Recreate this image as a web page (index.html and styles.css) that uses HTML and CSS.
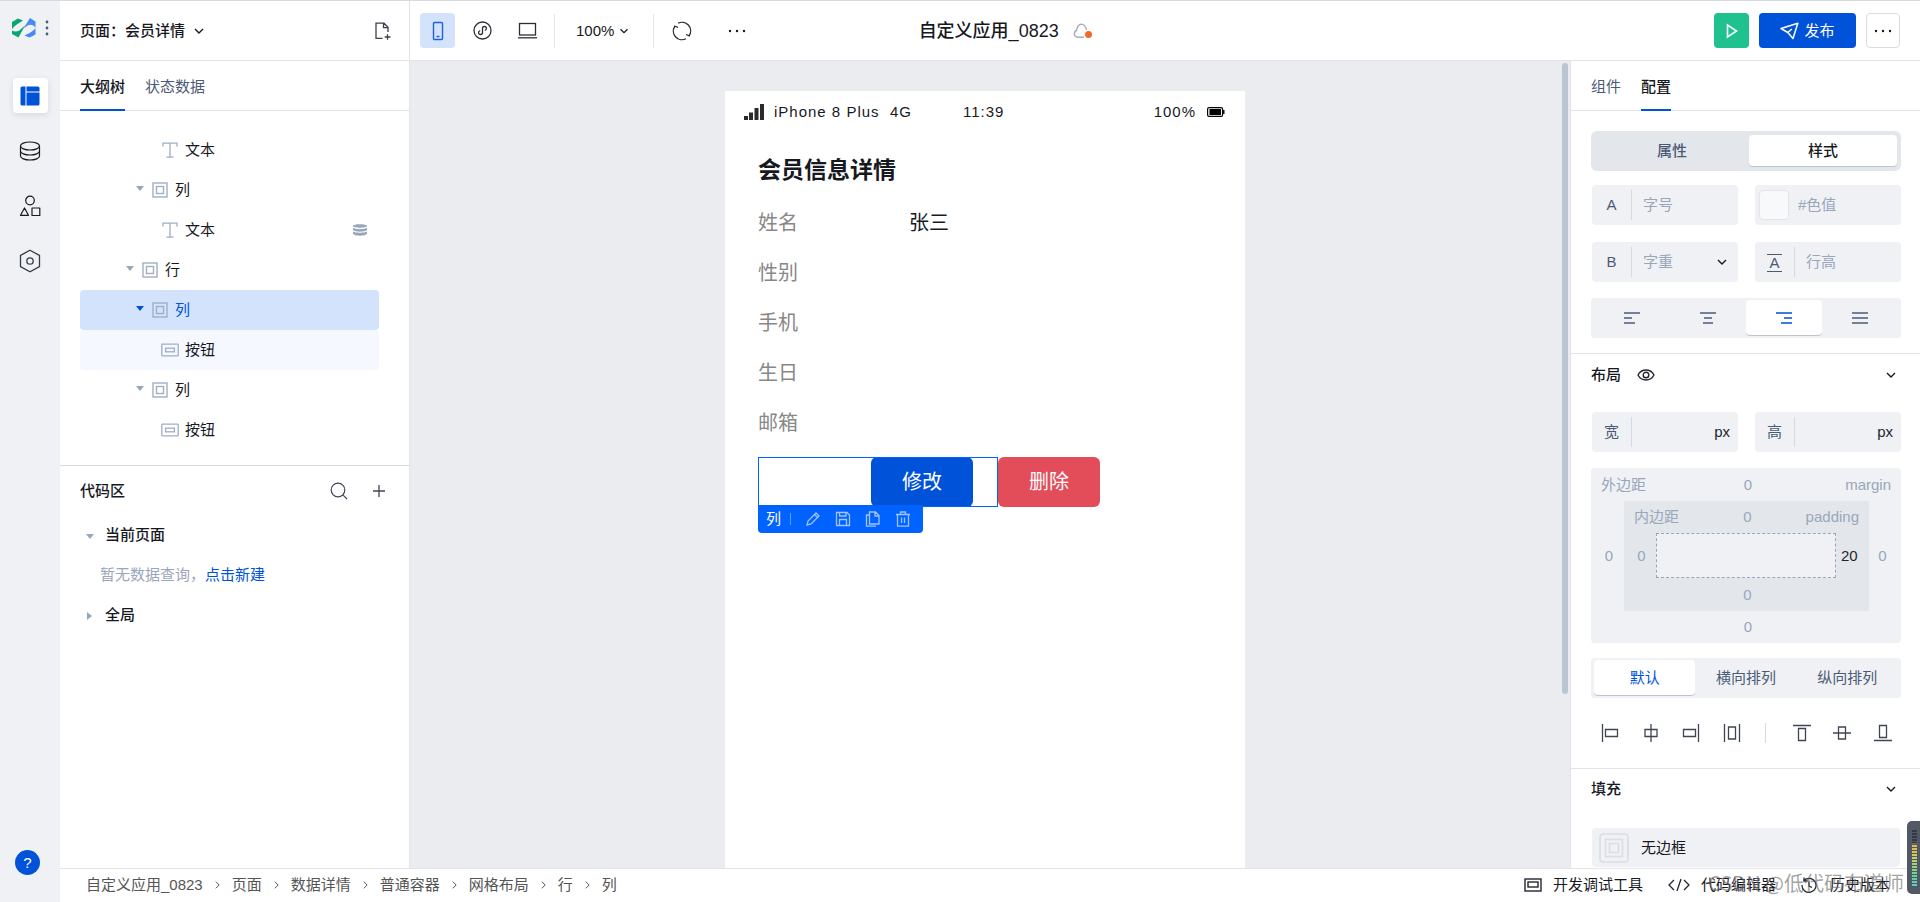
FILE: index.html
```html
<!DOCTYPE html>
<html lang="zh-CN">
<head>
<meta charset="utf-8">
<title>自定义应用_0823</title>
<link rel="stylesheet" href="styles.css">
</head>
<body>
<svg class="defs" aria-hidden="true">
  <symbol id="chev" viewBox="0 0 16 16"><path d="M4 6l4 4 4-4" fill="none" stroke="currentColor" stroke-width="1.4"/></symbol>
  <symbol id="crumb" viewBox="0 0 6 10"><path d="M1 1l4 4-4 4" fill="none" stroke="currentColor" stroke-width="1.2"/></symbol>
  <symbol id="box" viewBox="0 0 16 16"><g fill="none" stroke="#a0aec3"><rect x="1" y="1" width="14" height="14" stroke-width="1.4"/><rect x="4.5" y="4.5" width="7" height="7" stroke-width="1.4"/></g></symbol>
  <symbol id="btn" viewBox="0 0 18 14"><g fill="none" stroke="#a0aec3" stroke-width="1.3"><rect x=".8" y="1.2" width="16.4" height="11.6" rx=".5"/><rect x="4.6" y="5.2" width="8.8" height="3.6"/></g></symbol>
  <symbol id="txt" viewBox="0 0 16 16"><path d="M1 4.500V1.200h14v3.300M8 1.200v14M4.500 15.200h7" fill="none" stroke="#a0aec3" stroke-width="1.300"/></symbol>
</svg>
<div class="app">
  <nav class="rail" aria-label="主导航">
    <div class="brand">
      <svg width="24" height="20" viewBox="0 0 24 20"><path d="M0 4 6 .5l5 2C7 5 2 8 0 11zM0 12.500c2 1.500 5 1.200 7 .2L13 7.500 6.500 19.500 0 16z" fill="#0aa66e"/><path d="M11.500 10.500 18 0l5.500 3.500V10c-1.500-3-5-4-8-2.500zM12.500 17.500c4-1.500 9-4.500 11-7.500v6.500l-6 3z" fill="#4789f5"/></svg>
      <svg width="4" height="16" viewBox="0 0 4 16" fill="#4b5b76"><circle cx="2" cy="2" r="1.400"/><circle cx="2" cy="8" r="1.400"/><circle cx="2" cy="14" r="1.400"/></svg>
    </div>
    <button class="rail-btn on" aria-label="页面"><svg width="20" height="20" viewBox="0 0 20 20" fill="#0052d9"><path d="M.5 2a1.500 1.500 0 0 1 1.500-1.500h3.500v19H2A1.500 1.500 0 0 1 .5 18zM6.500.5H18A1.500 1.500 0 0 1 19.500 2v3.500h-13zM6.500 6.500h13V18a1.500 1.500 0 0 1-1.500 1.500H6.500z"/></svg></button>
    <button class="rail-btn" aria-label="数据"><svg width="22" height="20" viewBox="0 0 22 20" fill="none" stroke="#17191f" stroke-width="1.200"><ellipse cx="11" cy="5" rx="9.500" ry="4"/><path d="M1.500 5v10c0 2.200 4.200 4 9.500 4s9.500-1.800 9.500-4V5M1.500 10c0 2.200 4.200 4 9.500 4s9.500-1.800 9.500-4"/></svg></button>
    <button class="rail-btn" aria-label="组件"><svg width="22" height="22" viewBox="0 0 22 22" fill="none" stroke="#17191f" stroke-width="1.200"><circle cx="11" cy="5.500" r="4.300"/><path d="M5.500 13 9.500 20.300h-8zM13 13h7.800v7.500H13z" stroke-linejoin="round"/></svg></button>
    <button class="rail-btn" aria-label="设置"><svg width="22" height="24" viewBox="0 0 22 24" fill="none" stroke="#363c47" stroke-width="1.300"><path d="M11 1.200 20.500 6.500v11L11 22.800 1.500 17.500v-11z"/><circle cx="11" cy="12" r="3.200"/></svg></button>
    <button class="help" aria-label="帮助">?</button>
  </nav>

  <div class="body">
    <header class="top">
      <div class="top-page">
        <button class="plain page-pick">页面：会员详情 <svg width="16" height="16"><use href="#chev"/></svg></button>
        <button class="plain" aria-label="新建页面"><svg width="16" height="18" viewBox="0 0 16 18" fill="none" stroke="#3a404c" stroke-width="1.300"><path d="M7.500 16.300H1V1.200h8l4 4V10M8.500 1.200v4.500H13M12.500 12.200v5.600M9.700 15h5.800"/></svg></button>
      </div>
      <div class="top-main">
        <div class="tools">
          <button class="tool on" aria-label="手机"><svg width="12" height="20" viewBox="0 0 12 20" fill="none" stroke="#1f62e0" stroke-width="1.400"><rect x="1.500" y="1.500" width="9" height="17" rx="1"/><path d="M4.500 15.500h3"/></svg></button>
          <button class="tool" aria-label="小程序"><svg width="19" height="19" viewBox="0 0 19 19" fill="none" stroke="#2a2e36" stroke-width="1.300"><circle cx="9.500" cy="9.500" r="8.500"/><path d="M11.800 9.300c2-.5 2.500-3.800-.4-3.800-1.200 0-1.900.9-1.900 2v4c0 1.100-.7 2-1.900 2-2.900 0-2.400-3.300-.4-3.800"/></svg></button>
          <button class="tool" aria-label="电脑"><svg width="19" height="17" viewBox="0 0 19 17" fill="none" stroke="#2a2e36" stroke-width="1.300"><rect x="1.500" y="1.500" width="16" height="11.500"/><path d="M0 15.800h19"/></svg></button>
          <span class="vline"></span>
          <button class="plain zoom">100%<svg width="14" height="14"><use href="#chev"/></svg></button>
          <span class="vline"></span>
          <button class="tool" aria-label="刷新"><svg width="20" height="20" viewBox="0 0 20 20" fill="none" stroke="#2a2e36" stroke-width="1.300"><path d="M6 2.300A8.600 8.600 0 0 1 17.300 14.500M14 17.700A8.600 8.600 0 0 1 2.700 5.500M18.600 11.500 17.200 14.800 14 13.500M1.400 8.500 2.800 5.200 6 6.500"/></svg></button>
          <button class="tool more" aria-label="更多"><svg width="18" height="4" viewBox="0 0 18 4" fill="#17191f"><circle cx="2" cy="2" r="1.200"/><circle cx="9" cy="2" r="1.200"/><circle cx="16" cy="2" r="1.200"/></svg></button>
        </div>
        <div class="title">自定义应用_0823
          <svg width="20" height="16" viewBox="0 0 20 16"><path d="M11 14.200H4.500A3.500 3.500 0 0 1 3.500 7.500C4 4 6 1.200 8.500 1.200S13 4 13.500 7" fill="none" stroke="#a3adbd" stroke-width="1.400"/><circle cx="15.500" cy="11.500" r="3.500" fill="#f2692a"/></svg>
        </div>
        <div class="actions">
          <button class="run" aria-label="预览"><svg width="12" height="16" viewBox="0 0 12 16" fill="none" stroke="#fff" stroke-width="1.600"><path d="M1.500 2v12l9-6z"/></svg></button>
          <button class="publish"><svg width="19" height="18" viewBox="0 0 19 18" fill="none" stroke="#fff" stroke-width="1.500"><path d="M1 6.500 17.800 1.200 13 16.500 7.800 10.500zM7.800 10.500l4-3.500" stroke-linejoin="round"/></svg>发布</button>
          <button class="dots" aria-label="更多操作"><svg width="18" height="4" viewBox="0 0 18 4" fill="#17191f"><circle cx="2" cy="2" r="1.200"/><circle cx="9" cy="2" r="1.200"/><circle cx="16" cy="2" r="1.200"/></svg></button>
        </div>
      </div>
    </header>

    <div class="work">
      <aside class="left">
        <div class="tabs"><button class="tab on">大纲树</button><button class="tab">状态数据</button></div>
        <ul class="tree">
          <li class="l3"><svg width="16" height="16"><use href="#txt"/></svg>文本</li>
          <li class="l2"><i class="caret"></i><svg width="16" height="16"><use href="#box"/></svg>列</li>
          <li class="l3"><svg width="16" height="16"><use href="#txt"/></svg>文本
            <svg class="bind" width="14" height="12" viewBox="0 0 14 12"><path d="M0 2C0-.3 14-.3 14 2S0 4.300 0 2zM0 3.800c2 1.600 12 1.600 14 0v2.200c-1 2.300-13 2.300-14 0zM0 7.600c2 1.600 12 1.600 14 0v2.200c-1 2.500-13 2.500-14 0z" fill="#99a6bb"/></svg></li>
          <li class="l1"><i class="caret"></i><svg width="16" height="16"><use href="#box"/></svg>行</li>
          <li class="l2 sel"><i class="caret"></i><svg width="16" height="16"><use href="#box"/></svg>列</li>
          <li class="l3 wide sub"><svg width="18" height="14"><use href="#btn"/></svg>按钮</li>
          <li class="l2"><i class="caret"></i><svg width="16" height="16"><use href="#box"/></svg>列</li>
          <li class="l3 wide"><svg width="18" height="14"><use href="#btn"/></svg>按钮</li>
        </ul>
        <section class="code">
          <div class="code-head"><h2>代码区</h2>
            <button class="plain" aria-label="搜索"><svg width="18" height="18" viewBox="0 0 18 18" fill="none" stroke="#3f4552" stroke-width="1.200"><circle cx="8" cy="8" r="6.800"/><path d="M12.800 12.800 17 17"/></svg></button>
            <button class="plain" aria-label="添加"><svg width="12" height="12" viewBox="0 0 12 12" stroke="#3f4552" stroke-width="1.300"><path d="M6 0v12M0 6h12"/></svg></button>
          </div>
          <div class="group"><i class="caret small"></i>当前页面</div>
          <p class="empty">暂无数据查询，<a href="#new">点击新建</a></p>
          <div class="group"><i class="caret small shut"></i>全局</div>
        </section>
      </aside>

      <main class="canvas">
        <div class="stage">
          <div class="phone">
            <div class="status">
              <svg width="20" height="16" viewBox="0 0 20 16" fill="#2b2b2b"><path d="M0 12h4v4H0zM5 8.500h4V16H5zM10.500 4h4v12h-4zM16 0h4v16h-4z"/></svg>
              <span class="carrier">iPhone 8 Plus&nbsp; 4G</span><span class="clock">11:39</span><span class="power">100%</span>
              <svg width="18" height="10" viewBox="0 0 18 10"><rect x=".6" y=".6" width="15" height="8.800" rx="1.500" fill="none" stroke="#000" stroke-width="1.200"/><rect x="2.500" y="2" width="11.500" height="6" fill="#000"/><path d="M16.800 3v4" stroke="#000" stroke-width="1.400"/></svg>
            </div>
            <h1>会员信息详情</h1>
            <dl class="info">
              <dt>姓名</dt><dd>张三</dd>
              <dt>性别</dt><dd></dd>
              <dt>手机</dt><dd></dd>
              <dt>生日</dt><dd></dd>
              <dt>邮箱</dt><dd></dd>
            </dl>
            <div class="btn-row">
              <div class="col picked"><button class="pbtn">修改</button>
                <div class="float">
                  <span>列</span><i></i>
                  <svg width="16" height="16" viewBox="0 0 16 16"><path d="M2 14l1-4 8-8 3 3-8 8zM9.500 3.500l3 3"/></svg>
                  <svg width="16" height="16" viewBox="0 0 16 16"><path d="M1.500 1.500h10.500l2.500 2.500v10.500h-13zM4.500 1.500v3.500h6.500V1.500M4.500 14.500V8.500h7v6"/></svg>
                  <svg width="16" height="16" viewBox="0 0 16 16"><path d="M4.500 1h6l3.500 3.500V13H4.500zM10 1v4h4M4 4H1.500v11.200H11"/></svg>
                  <svg width="16" height="16" viewBox="0 0 16 16"><path d="M1 3.500h14M5.500 3.500V1h5v2.500M2.500 3.500v11.700h11V3.500M6.500 6.500v5.500M9.500 6.500v5.500"/></svg>
                </div>
              </div>
              <div class="col"><button class="pbtn danger">删除</button></div>
            </div>
          </div>
        </div>
        <div class="thumb"></div>
      </main>

      <aside class="right">
        <div class="tabs"><button class="tab">组件</button><button class="tab on">配置</button></div>
        <div class="props">
          <div class="seg big"><button>属性</button><button class="on">样式</button></div>
          <div class="pair">
            <label class="field"><span class="tag">A</span><input type="text" placeholder="字号"></label>
            <label class="field"><span class="swatch"></span><input type="text" placeholder="#色值"></label>
            <label class="field"><span class="tag">B</span><select><option>字重</option></select><svg width="16" height="16"><use href="#chev"/></svg></label>
            <label class="field"><span class="tag"><b class="lh">A</b></span><input type="text" placeholder="行高"></label>
          </div>
          <div class="seg four">
            <button aria-label="左对齐"><svg width="16" height="12" viewBox="0 0 16 12"><path d="M0 1h16M0 6h8M0 11h11"/></svg></button>
            <button aria-label="居中"><svg width="16" height="12" viewBox="0 0 16 12"><path d="M0 1h16M4 6h8M3 11h10"/></svg></button>
            <button class="on" aria-label="右对齐"><svg width="16" height="12" viewBox="0 0 16 12"><path d="M0 1h16M8 6h8M5 11h11"/></svg></button>
            <button aria-label="两端对齐"><svg width="16" height="12" viewBox="0 0 16 12"><path d="M0 1h16M0 6h16M0 11h16"/></svg></button>
          </div>
        </div>
        <section class="props layout">
          <div class="sec"><h2>布局</h2><svg width="18" height="12" viewBox="0 0 18 12" fill="none" stroke="#23262e" stroke-width="1.400"><path d="M1 6C4.500-.7 13.500-.7 17 6 13.500 12.700 4.500 12.700 1 6z"/><circle cx="9" cy="6" r="2.800"/></svg><svg class="end" width="16" height="16"><use href="#chev"/></svg></div>
          <div class="pair">
            <label class="field"><span class="tag">宽</span><input type="text"><em>px</em></label>
            <label class="field"><span class="tag">高</span><input type="text"><em>px</em></label>
          </div>
          <div class="model outer">
            <span>外边距</span><span>0</span><span>margin</span>
            <span>0</span>
            <div class="model inner">
              <span>内边距</span><span>0</span><span>padding</span>
              <span>0</span><div class="core"></div><span class="set">20</span>
              <span class="foot">0</span>
            </div>
            <span>0</span>
            <span class="foot">0</span>
          </div>
          <div class="seg three"><button class="on">默认</button><button>横向排列</button><button>纵向排列</button></div>
          <div class="aligns">
            <button aria-label="靠左"><svg width="18" height="18" viewBox="0 0 18 18"><path d="M1.500 0v18M4.500 5.500h12v7h-12z"/></svg></button>
            <button aria-label="水平居中"><svg width="18" height="18" viewBox="0 0 18 18"><path d="M9 0v18M3 5.500h12v7H3z"/></svg></button>
            <button aria-label="靠右"><svg width="18" height="18" viewBox="0 0 18 18"><path d="M16.500 0v18M1.500 5.500h12v7h-12z"/></svg></button>
            <button aria-label="水平分布"><svg width="18" height="18" viewBox="0 0 18 18"><path d="M1.500 0v18M16.500 0v18M5.500 3h7v12h-7z"/></svg></button>
            <i></i>
            <button aria-label="靠上"><svg width="18" height="18" viewBox="0 0 18 18"><path d="M0 1.500h18M5.500 4.500h7v12h-7z"/></svg></button>
            <button aria-label="垂直居中"><svg width="18" height="18" viewBox="0 0 18 18"><path d="M0 9h18M5.500 3h7v12h-7z"/></svg></button>
            <button aria-label="靠下"><svg width="18" height="18" viewBox="0 0 18 18"><path d="M0 16.500h18M5.500 1.500h7v12h-7z"/></svg></button>
          </div>
        </section>
        <section class="props fill">
          <div class="sec"><h2>填充</h2><svg class="end" width="16" height="16"><use href="#chev"/></svg></div>
          <button class="border-pick"><svg width="30" height="30" viewBox="0 0 30 30" fill="none" stroke="#d9dde6" stroke-width="1.600"><rect x="1" y="1" width="28" height="28" rx="3"/><rect x="6.500" y="6.500" width="17" height="17"/><rect x="10.500" y="10.500" width="9" height="9"/></svg>无边框</button>
        </section>
      </aside>
    </div>

    <footer class="bottom">
      <nav class="crumbs" aria-label="层级">
        <a href="#0">自定义应用_0823</a><svg><use href="#crumb"/></svg><a href="#1">页面</a><svg><use href="#crumb"/></svg><a href="#2">数据详情</a><svg><use href="#crumb"/></svg><a href="#3">普通容器</a><svg><use href="#crumb"/></svg><a href="#4">网格布局</a><svg><use href="#crumb"/></svg><a href="#5">行</a><svg><use href="#crumb"/></svg><a href="#6">列</a>
      </nav>
      <button class="plain"><svg width="18" height="14" viewBox="0 0 18 14" fill="none" stroke="#23262e" stroke-width="1.400"><rect x="1" y="1" width="16" height="12"/><rect x="4" y="4" width="10" height="5"/></svg>开发调试工具</button>
      <button class="plain"><svg width="22" height="14" viewBox="0 0 22 14" fill="none" stroke="#23262e" stroke-width="1.300"><path d="M6 2 1 7l5 5M16 2l5 5-5 5M13 1 9 13"/></svg>代码编辑器</button>
      <button class="plain last"><svg width="16" height="16" viewBox="0 0 16 16" fill="none" stroke="#23262e" stroke-width="1.300"><path d="M3 3.500A7 7 0 1 1 1 8M3 .5v3.500h3.500M8 4.500V9l3 1.500"/></svg>历史版本</button>
    </footer>
  </div>
  <div class="watermark">CSDN @低代码布道师</div>
  <div class="meter"><i></i></div>
</div>
</body>
</html>
```
FILE: styles.css
```css
* { box-sizing: border-box; }
body {
  margin: 0;
  font: 15px/20px "Liberation Sans", "Noto Sans CJK SC", sans-serif;
  color: #17191f;
  overflow: hidden;
}
button, input, select { font: inherit; color: inherit; border: 0; padding: 0; background: none; outline: 0; }
h1, h2, p, ul, dl, dd { margin: 0; padding: 0; }
h2 { font-size: 15px; font-weight: 500; }
a { color: inherit; text-decoration: none; }
svg { flex: none; display: block; }
.defs { position: absolute; width: 0; height: 0; }
.plain { display: flex; align-items: center; }

.app { position: relative; display: flex; height: 100vh; border-top: 1px solid #d9dadd; }
.body { flex: 1; min-width: 0; display: flex; flex-direction: column; }

/* Icon rail */
.rail { flex: none; width: 60px; background: #f0f1f5; display: flex; flex-direction: column; align-items: center; gap: 20px; padding: 17px 0 27px; }
.brand { display: flex; align-items: center; gap: 9px; height: 20px; margin-bottom: 20px; }
.rail-btn { width: 35px; height: 35px; display: grid; place-items: center; border-radius: 4px; }
.rail-btn.on { background: #fff; box-shadow: 0 2px 6px rgba(30, 45, 80, .12); }
.help { width: 25px; height: 25px; margin: auto 5px 0 0; border-radius: 50%; background: #0052d9; color: #fff; line-height: 25px; }

/* Header */
.top { flex: none; height: 60px; display: flex; border-bottom: 1px solid #e2e4ea; background: #fff; }
.top-page { width: 350px; padding: 0 18px 0 20px; display: flex; align-items: center; justify-content: space-between; border-right: 1px solid #e2e4ea; font-weight: 500; }
.page-pick { font-weight: 500; gap: 6px; }
.top-main { flex: 1; display: flex; align-items: center; padding-right: 20px; }
.tools { flex: 504 0 0; display: flex; align-items: center; padding-left: 10px; gap: 10px; }
.tool { width: 35px; height: 35px; border-radius: 4px; display: grid; place-items: center; }
.tool.on { background: #d3e3fc; }
.tool.more { margin-left: 10px; }
.vline { width: 1px; height: 34px; background: #e2e4ea; }
.tool + .vline { margin-left: -1px; }
.zoom { gap: 3px; margin: 0 12px 0 11px; }
.title { display: flex; align-items: center; gap: 14px; font-size: 18px; font-weight: 500; }
.actions { flex: 816 0 0; display: flex; justify-content: flex-end; gap: 10px; }
.actions button { height: 35px; border-radius: 4px; display: flex; align-items: center; justify-content: center; }
.run { width: 35px; background: #1fc28f; }
.publish { width: 97px; gap: 5px; background: #0052d9; color: #fff; }
.dots { width: 34px; border: 1px solid #d8dce6; }

.work { flex: 1; min-height: 0; display: flex; }
.tabs { display: flex; gap: 20px; height: 50px; padding: 0 20px; border-bottom: 1px solid #e2e4ea; }
.tab { height: 50px; color: #4b5b76; border-bottom: 2px solid transparent; padding-top: 3px; }
.tab.on { color: #17191f; font-weight: 500; border-color: #0052d9; }

/* Outline tree */
.left { flex: none; width: 350px; border-right: 1px solid #e2e4ea; background: #fff; }
.tree { list-style: none; padding: 19px 30px 15px 20px; border-bottom: 1px solid #d5d9e2; }
.tree li { height: 40px; display: flex; align-items: center; gap: 7px; border-radius: 4px; padding-right: 12px; }
.tree .l1 { padding-left: 46px; }
.tree .l2 { padding-left: 56px; }
.tree .l3 { padding-left: 82px; }
.tree .wide { padding-left: 81px; gap: 6px; }
.tree .sel { background: #d3e3fc; color: #0052d9; }
.tree .sub { background: #f5f8ff; }
.bind { margin-left: auto; }
.caret { border: 4px solid transparent; border-top: 5px solid #99a6bb; border-bottom: 0; margin: 0 1px 3px 0; }
.sel .caret { border-top-color: #0052d9; }
.caret.small { margin: 3px 8px 0 0; }
.caret.shut { border: 4px solid transparent; border-left: 5px solid #99a6bb; border-right: 0; margin: 2px 10px 0 1px; }
.code { padding: 0 20px; }
.code-head { height: 49px; display: flex; align-items: center; gap: 25px; padding-right: 4px; }
.code-head h2 { margin-right: auto; }
.group { height: 40px; display: flex; align-items: center; gap: 3px; padding-left: 6px; font-weight: 500; }
.empty { line-height: 40px; padding-left: 20px; color: #99a6bb; }
.empty a { color: #0052d9; }

/* Canvas */
.canvas { flex: 1; min-width: 0; display: flex; background: #ebecf0; padding: 2px 2px 0 0; }
.stage { flex: 1; display: flex; justify-content: center; padding: 28px 2px 0 0; }
.phone { width: 520px; padding: 0 7px 0 33px; background: #fff; }
.status { height: 42px; margin: 0 13px 0 -14px; display: flex; align-items: center; font-size: 15px; letter-spacing: 1px; }
.carrier { margin-left: 10px; }
.clock { margin-left: 51px; }
.power { margin: 0 11px 0 auto; }
.phone h1 { font-size: 23px; line-height: 30px; margin: 22px 0 13px; font-weight: 700; }
.info { display: grid; grid-template-columns: 151px 1fr; grid-auto-rows: 50px; align-items: center; font-size: 20px; }
.info dt { color: #888; }
.btn-row { display: flex; margin-top: 9px; }
.col { position: relative; flex: 0 0 50%; height: 50px; display: flex; }
.picked { justify-content: flex-end; padding-right: 25px; outline: 1px solid #0062ff; outline-offset: -1px; }
.pbtn { width: 102px; border-radius: 6px; background: #0052d9; color: #fff; font-size: 20px; }
.danger { background: #e34d59; }
.float { position: absolute; top: 48px; left: 0; height: 28px; display: flex; align-items: center; gap: 14px; padding: 0 12px 0 8px; background: #0062ff; color: #fff; border-radius: 0 0 4px 4px; }
.float span { margin-right: -5px; }
.float i { width: 1px; height: 12px; background: #5c9bff; }
.float svg { fill: none; stroke: #9fc4ff; stroke-width: 1.3; }
.thumb { flex: none; width: 6px; height: 631px; border-radius: 3px; background: #bcc4d0; }

/* Config panel */
.right { flex: none; width: 350px; border-left: 1px solid #e2e4ea; background: #fff; overflow: hidden; }
.props { display: flex; flex-direction: column; gap: 17px; padding: 20px 19px 15px 20px; border-bottom: 1px solid #e2e4ea; }
.seg { display: flex; height: 40px; padding: 2px 3px; border-radius: 4px; background: #f0f1f5; color: #4b5b76; }
.seg button { flex: 1; border-radius: 4px; display: grid; place-items: center; }
.seg .on { background: #fff; color: #0052d9; box-shadow: 0 1px 0 #bcc4d0; margin-bottom: 1px; }
.seg svg { fill: none; stroke: currentColor; stroke-width: 1.3; }
.big { background: #e3e6eb; border-radius: 6px; padding: 4px; margin-bottom: -3px; }
.big button { font-weight: 500; }
.seg.big .on { flex: 0 0 49%; color: #17191f; }
.four { margin-top: -1px; }
.pair { display: grid; grid-template-columns: 1fr 1fr; gap: 17px 16px; }
.field { height: 40px; min-width: 0; display: flex; align-items: center; padding: 0 8px 0 0; background: #f0f1f5; border-radius: 4px; margin-left: 1px; }
.field input, .field select { flex: 1; min-width: 0; width: 0; padding-left: 11px; appearance: none; color: #99a6bb; }
.field input::placeholder { color: #99a6bb; opacity: 1; }
.field em { font-style: normal; color: #23262e; }
.tag { width: 40px; height: 30px; line-height: 30px; text-align: center; color: #4b5b76; border-right: 1px solid #d5d9e2; }
.lh { display: inline-block; font-weight: 400; width: 15px; line-height: 16px; border: solid #4b5b76; border-width: 1px 0; vertical-align: middle; }
.swatch { width: 30px; height: 30px; margin-left: 4px; margin-right: -2px; border: 1px solid #e2e4ea; border-radius: 4px; background: #f8f9fb; }
.layout { padding-top: 0; gap: 16px; }
.sec { height: 42px; display: flex; align-items: center; gap: 16px; }
.end { margin-left: auto; margin-right: 2px; }

/* Box model editor */
.model { display: grid; text-align: center; align-items: center; color: #99a6bb; }
.model > span { padding-left: 3px; }
.outer { grid-template: 33px 110px 32px / 33px 1fr 32px; background: #f0f1f5; border-radius: 4px; }
.inner { grid-template: 32px 45px 33px / 32px 1fr 33px; background: #e3e6eb; }
.model > span:nth-child(1) { grid-area: 1 / 1 / 2 / 3; text-align: left; padding-left: 10px; }
.model > span:nth-child(2) { grid-area: 1 / 2; }
.model > span:nth-child(3) { grid-area: 1 / 2 / 2 / 4; text-align: right; padding-right: 10px; }
.outer > span:nth-child(6) { padding: 0 5px 0 0; }
.model .foot { grid-column: 2; }
.model .set { color: #23262e; text-align: left; padding-left: 5px; }
.core { height: 45px; border: 1px dashed #99a6bb; background: #f0f1f5; }
.three { margin-top: -1px; }
.aligns { height: 35px; display: flex; align-items: center; justify-content: space-between; padding: 0 9px 0 10px; }
.aligns svg { fill: none; stroke: #3f4552; stroke-width: 1.3; }
.aligns i { width: 1px; height: 20px; margin: 0 4px 0 2px; background: #d5d9e2; }
.layout .aligns { margin: 1px 0 3px; }
.fill { padding-top: 0; border: 0; gap: 19px; }
.fill .sec { height: 40px; }
.border-pick { height: 39px; display: flex; align-items: center; gap: 12px; padding-left: 7px; background: #f0f1f5; border-radius: 4px; margin: 0 1px; }

/* Footer */
.bottom { flex: none; height: 34px; border-top: 1px solid #e2e4ea; background: #fff; display: flex; align-items: center; padding: 0 30px 1px 26px; gap: 25px; }
.bottom .plain { gap: 11px; }
.bottom .last { gap: 13px; }
.crumbs { display: flex; align-items: center; gap: 12px; margin-right: auto; color: #555; }
.crumbs svg { width: 5px; height: 10px; }

.watermark { position: absolute; right: 16px; bottom: 5px; font: 20px/28px "Noto Sans CJK SC", sans-serif; color: rgba(100, 100, 100, .6); }
.meter { position: absolute; right: 0; bottom: 8px; width: 13px; height: 73px; padding: 8px 3px 8px 5px; background: #535867; border-radius: 5px 0 0 5px; }
.meter i { display: block; height: 57px; background: repeating-linear-gradient(#535867 0 1px, transparent 1px 3px), linear-gradient(#343844 0 25%, #e8b64c 26%, #c9d35a 50%, #5fd39a 85%, #4fd6b8); }
```
